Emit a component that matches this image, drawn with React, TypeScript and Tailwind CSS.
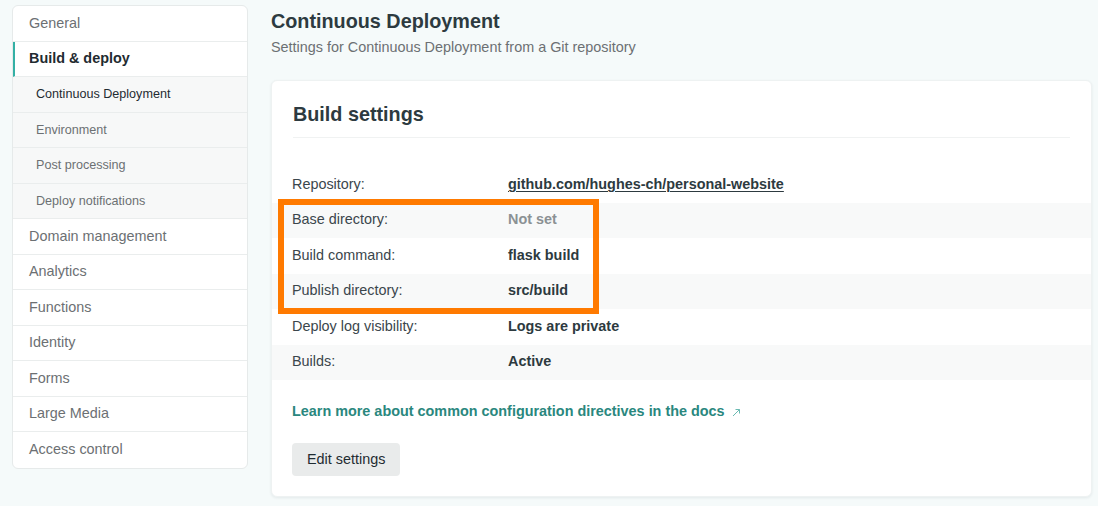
import React from "react";

const sideItems: { label: string; kind: "main" | "active" | "sub" | "subActive" }[] = [
  { label: "General", kind: "main" },
  { label: "Build & deploy", kind: "active" },
  { label: "Continuous Deployment", kind: "subActive" },
  { label: "Environment", kind: "sub" },
  { label: "Post processing", kind: "sub" },
  { label: "Deploy notifications", kind: "sub" },
  { label: "Domain management", kind: "main" },
  { label: "Analytics", kind: "main" },
  { label: "Functions", kind: "main" },
  { label: "Identity", kind: "main" },
  { label: "Forms", kind: "main" },
  { label: "Large Media", kind: "main" },
  { label: "Access control", kind: "main" },
];

const rows: { label: string; value: string; kind?: "link" | "muted" }[] = [
  { label: "Repository:", value: "github.com/hughes-ch/personal-website", kind: "link" },
  { label: "Base directory:", value: "Not set", kind: "muted" },
  { label: "Build command:", value: "flask build" },
  { label: "Publish directory:", value: "src/build" },
  { label: "Deploy log visibility:", value: "Logs are private" },
  { label: "Builds:", value: "Active" },
];

export default function App() {
  return (
    <div
      className="w-[1098px] h-[506px] bg-[#f5fafa] flex pl-3 overflow-hidden"
      style={{ fontFamily: '"Liberation Sans", Arial, sans-serif' }}
    >
      <aside className="w-[236px] mt-[5px] self-start bg-white border border-[#e6eaea] rounded-[6px] overflow-hidden">
        {sideItems.map((it, i) => {
          const last = i === sideItems.length - 1;
          const base = `h-[35.5px] flex items-center pt-[1px] ${last ? "" : "border-b border-[#eaeded]"}`;
          if (it.kind === "active")
            return (
              <div key={i} className={`${base} pl-[14px] border-l-2 border-l-[#34b0a5] text-[14.4px] font-bold text-[#1f2b31]`}>
                {it.label}
              </div>
            );
          if (it.kind === "sub" || it.kind === "subActive")
            return (
              <div
                key={i}
                className={`${base} pl-[23px] bg-[#f7f8f8] text-[12.6px] ${it.kind === "subActive" ? "text-[#1f2b31]" : "text-[#6c7073]"}`}
              >
                {it.label}
              </div>
            );
          return (
            <div key={i} className={`${base} pl-[16px] text-[14.4px] text-[#6c7073]`}>
              {it.label}
            </div>
          );
        })}
      </aside>

      <main className="ml-[23px] w-[821px] flex flex-col">
        <h1 className="mt-[8px] leading-[26px] text-[19.8px] font-bold text-[#2d3a40]">Continuous Deployment</h1>
        <p className="mt-[3px] leading-[20px] text-[14.4px] text-[#6c7073]">
          Settings for Continuous Deployment from a Git repository
        </p>

        <section className="relative mt-[23px] bg-white rounded-[6px] shadow-[0_1px_3px_rgba(0,40,50,0.08)] border border-[#eef2f2] pt-[20px] pb-[20px]">
          <div className="mx-[21px] pb-[10px] border-b border-[#f0f2f2]">
            <h2 className="leading-[26px] text-[19.8px] font-bold text-[#2d3a40]">Build settings</h2>
          </div>

          <div className="mt-[29px]">
            {rows.map((r, i) => (
              <div
                key={i}
                className={`h-[35.5px] flex items-center px-[20px] text-[14.4px] ${i % 2 === 1 ? "bg-[#f8f9f9]" : ""}`}
              >
                <span className="w-[216px] text-[#3b464c]">{r.label}</span>
                <span
                  className={`font-bold ${
                    r.kind === "link"
                      ? "text-[#2d3a40] underline decoration-1 underline-offset-2"
                      : r.kind === "muted"
                      ? "text-[#8b9194]"
                      : "text-[#2d3a40]"
                  }`}
                >
                  {r.value}
                </span>
              </div>
            ))}
          </div>

          <div className="mt-[21px] px-[20px] leading-[20px] flex items-center">
            <span className="text-[14.4px] font-bold text-[#2a877e]">
              Learn more about common configuration directives in the docs
            </span>
            <svg className="ml-[7px] mt-[2px]" width="9" height="9" viewBox="0 0 9 9" fill="none">
              <path d="M1 8 L7.5 1.5" stroke="#6bbab2" strokeWidth="1" />
              <path d="M3.5 1.5 H7.5 V5.5" stroke="#6bbab2" strokeWidth="1" fill="none" />
            </svg>
          </div>

          <div className="mt-[22px] px-[20px]">
            <button className="h-[33px] px-[15px] rounded-[4px] bg-[#e9ebeb] text-[14.4px] text-[#1f2b31]">
              Edit settings
            </button>
          </div>

          <div className="absolute left-[6px] top-[118px] w-[321px] h-[115px] border-[6px] border-[#ff7a00]" />
        </section>
      </main>
    </div>
  );
}
